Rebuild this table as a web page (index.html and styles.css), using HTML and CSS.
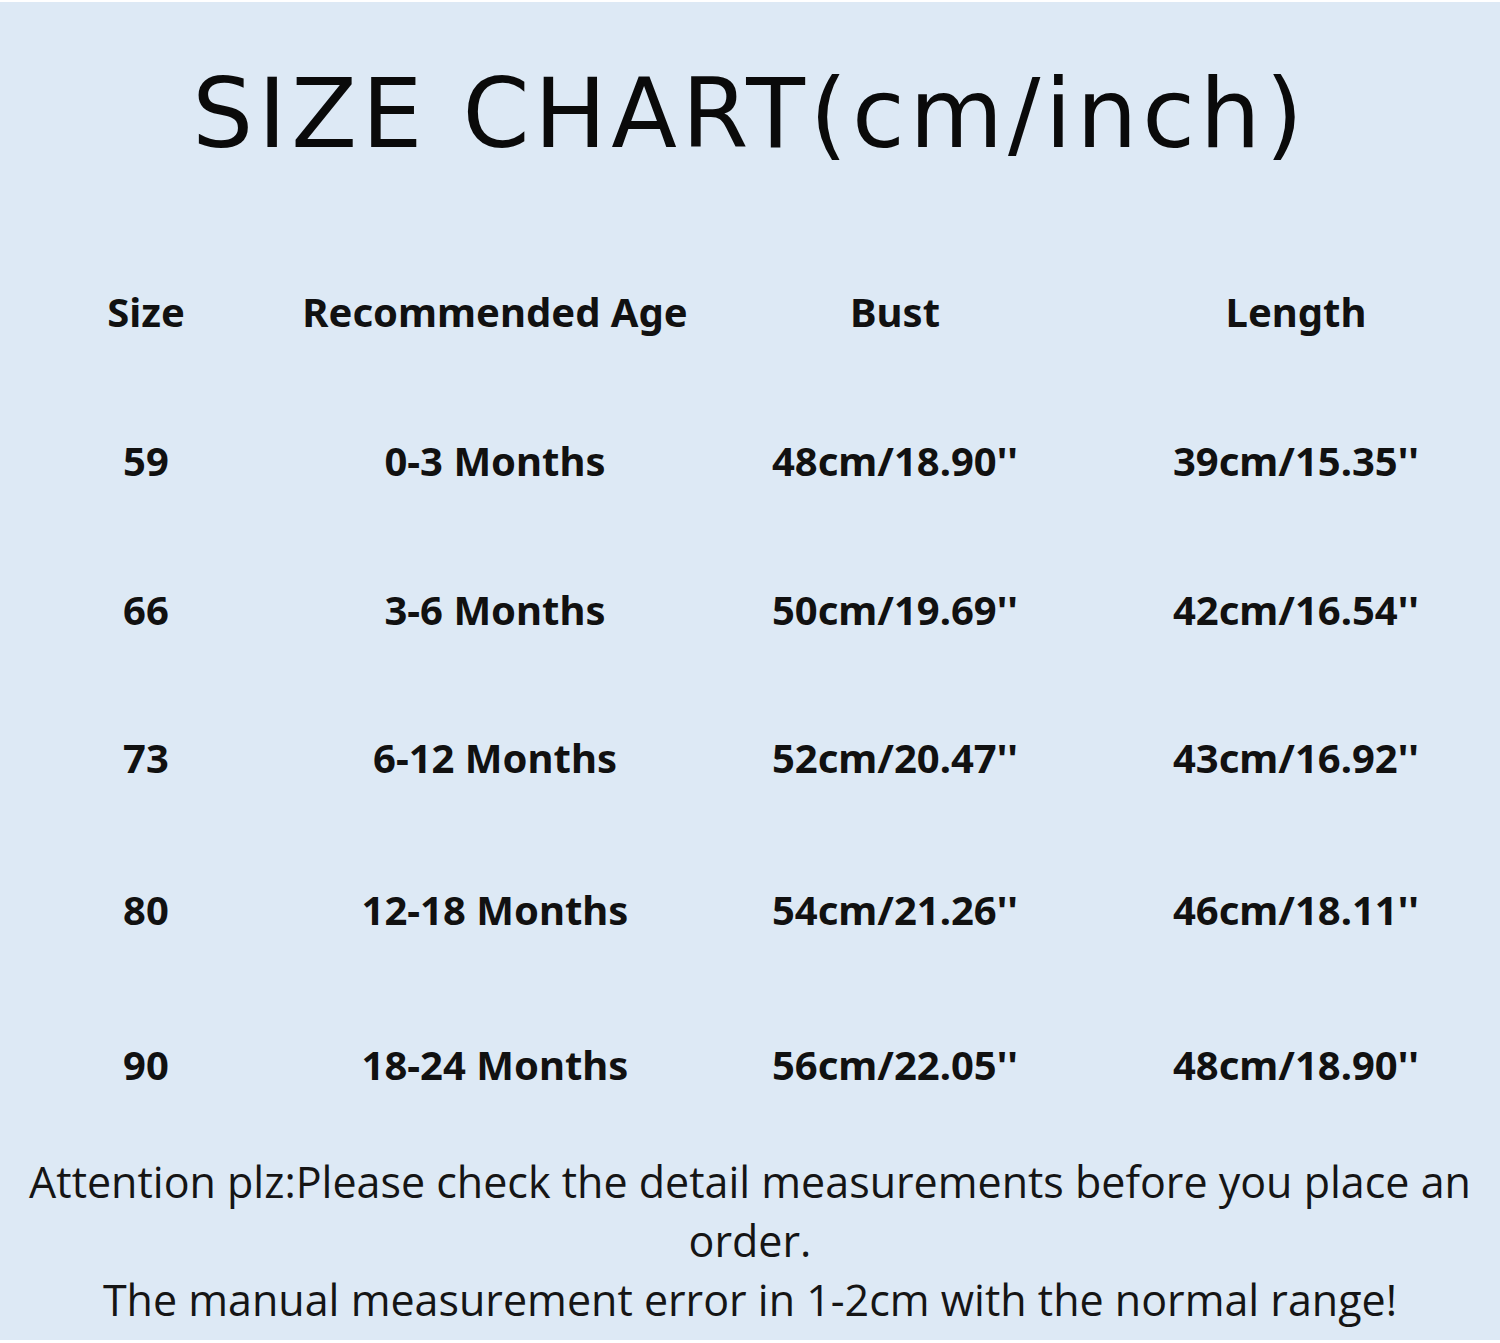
FILE: index.html
```html
<!DOCTYPE html>
<html lang="en">
<head>
<meta charset="utf-8">
<title>Size Chart</title>
<link rel="stylesheet" href="styles.css">
</head>
<body>
<main class="sheet">
  <h1 class="title">SIZE CHART(cm/inch)</h1>
  <section class="chart">
    <div class="cell head">Size</div>
    <div class="cell head">Recommended Age</div>
    <div class="cell head">Bust</div>
    <div class="cell head">Length</div>

    <div class="cell">59</div>
    <div class="cell">0-3 Months</div>
    <div class="cell">48cm/18.90''</div>
    <div class="cell">39cm/15.35''</div>

    <div class="cell">66</div>
    <div class="cell">3-6 Months</div>
    <div class="cell">50cm/19.69''</div>
    <div class="cell">42cm/16.54''</div>

    <div class="cell">73</div>
    <div class="cell">6-12 Months</div>
    <div class="cell">52cm/20.47''</div>
    <div class="cell">43cm/16.92''</div>

    <div class="cell">80</div>
    <div class="cell">12-18 Months</div>
    <div class="cell">54cm/21.26''</div>
    <div class="cell">46cm/18.11''</div>

    <div class="cell">90</div>
    <div class="cell">18-24 Months</div>
    <div class="cell">56cm/22.05''</div>
    <div class="cell">48cm/18.90''</div>
  </section>
  <p class="note">Attention plz:Please check the detail measurements before you place an order.<br>The manual measurement error in 1-2cm with the normal range!</p>
</main>
</body>
</html>
```

FILE: styles.css
```css
html, body {
  margin: 0;
  padding: 0;
}
body {
  background: #ffffff;
}
.sheet {
  height: 1338px;
  margin-top: 2px;
  background: #dde9f5;
  color: #111111;
  display: flex;
  flex-direction: column;
  align-items: stretch;
  overflow: hidden;
}
.title {
  margin: 0;
  padding-top: 50px;
  height: 124px;
  line-height: 124px;
  text-align: center;
  font-family: "DejaVu Sans", sans-serif;
  font-weight: normal;
  font-size: 96px;
  letter-spacing: 4.8px;
  color: #0a0a0a;
}
.chart {
  margin-top: 60px;
  display: grid;
  grid-template-columns: 292px 406px 394px 408px;
  grid-template-rows: 150px 149px 148px 149px 154px 156px;
}
.cell {
  display: flex;
  align-items: center;
  justify-content: center;
  font-family: "Noto Sans", "Open Sans", sans-serif;
  font-weight: bold;
  font-size: 40px;
  color: #111111;
}
.note {
  margin: 0;
  margin-top: 10px;
  padding: 0 20px;
  text-align: center;
  font-family: "Open Sans", "Noto Sans", sans-serif;
  font-size: 43px;
  line-height: 59px;
  color: #151515;
}
```
